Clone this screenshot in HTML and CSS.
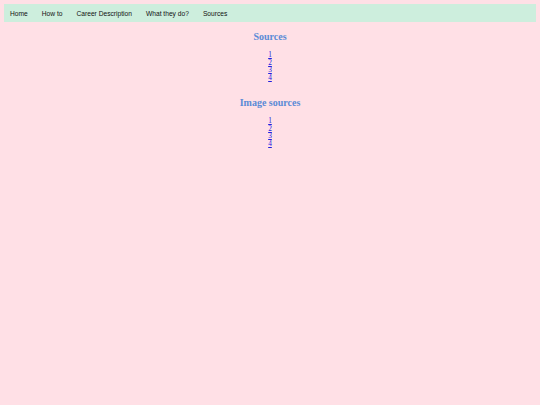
FILE: index.html
```html
<!DOCTYPE html>
<html>
<head>
<meta charset="utf-8">
<link rel="stylesheet" href="styles.css">
</head>
<body>
<nav class="nav">
  <a class="nav-item" href="#">Home</a>
  <a class="nav-item" href="#">How to</a>
  <a class="nav-item" href="#">Career Description</a>
  <a class="nav-item" href="#">What they do?</a>
  <a class="nav-item" href="#">Sources</a>
</nav>
<main class="content">
  <h2 class="title">Sources</h2>
  <ul class="links">
    <li><a href="#">1</a></li>
    <li><a href="#">2</a></li>
    <li><a href="#">3</a></li>
    <li><a href="#">4</a></li>
  </ul>
  <h2 class="title">Image sources</h2>
  <ul class="links">
    <li><a href="#">1</a></li>
    <li><a href="#">2</a></li>
    <li><a href="#">3</a></li>
    <li><a href="#">4</a></li>
  </ul>
</main>
</body>
</html>
```
FILE: styles.css
```css
html, body { height: 100%; }
body {
  margin: 0;
  padding: 4px;
  box-sizing: border-box;
  background: #ffe0e6;
  font-family: "Liberation Serif", serif;
}
.nav {
  display: flex;
  align-items: center;
  height: 18px;
  background: #cdeedd;
  padding-left: 6px;
}
.nav-item {
  font-family: "Liberation Sans", Arial, sans-serif;
  font-size: 6.67px;
  color: #111;
  text-decoration: none;
  margin-right: 14px;
}
.content {
  text-align: center;
}
.title {
  font-size: 10px;
  line-height: 11.5px;
  font-weight: bold;
  color: #5b8bd6;
  margin: 9.25px 0 8.5px;
}
.links {
  list-style: none;
  margin: 0 0 15.5px;
  padding: 0;
  font-size: 7.3px;
  line-height: 7.6px;
}
.links a { color: #2020e0; }
```
